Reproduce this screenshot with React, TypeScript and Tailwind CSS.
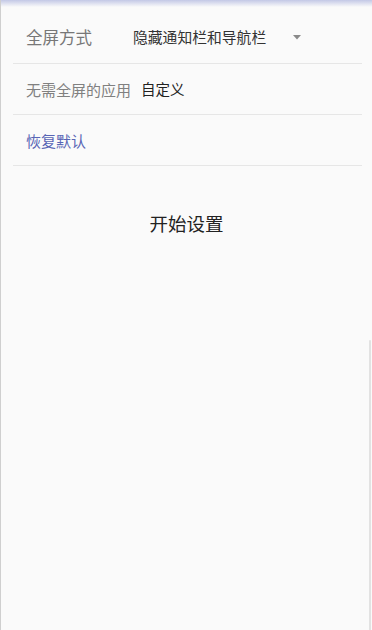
export default function App() {
  return (
    <div
      className="relative h-[630px] w-[372px] overflow-hidden border-l border-[#cfcfcf] bg-[#fafafa]"
      style={{ fontFamily: '"Noto Sans CJK SC", "Noto Sans", sans-serif' }}
    >
      {/* 顶部阴影 */}
      <div className="absolute inset-x-0 top-0 h-[7px] bg-gradient-to-b from-[#c3c8e6] to-transparent" />

      <div className="pl-[12px] pr-[10px]">
        <div className="flex h-[64px] items-center border-b border-[#e6e6e6] pl-[13px] pt-[12px]">
          <span className="w-[107px] text-[16.5px] leading-none text-[#777]">全屏方式</span>
          <span className="text-[14.8px] leading-none text-[#333]">隐藏通知栏和导航栏</span>
          <svg className="ml-[27px]" width="8" height="5" viewBox="0 0 8 5">
            <path d="M0 0h8L4 4.5z" fill="#8a8a8a" />
          </svg>
        </div>

        <div className="flex h-[51px] items-center border-b border-[#e6e6e6] pl-[13px] pt-[1px]">
          <span className="text-[15px] leading-none text-[#808080]">无需全屏的应用</span>
          <span className="ml-[10px] text-[14.5px] leading-none text-[#222]">自定义</span>
        </div>

        <div className="flex h-[51px] items-center border-b border-[#e6e6e6] pl-[13px] pt-[1px]">
          <span className="text-[15px] leading-none text-[#5865b5]">恢复默认</span>
        </div>
      </div>

      <div className="mt-[46px] text-center">
        <span className="text-[18.5px] leading-none text-[#222]">开始设置</span>
      </div>

      {/* 右侧边缘手柄 */}
      <div className="absolute right-[1px] top-[340px] bottom-0 w-[2px] rounded-t-full bg-[#e2e2e2]" />
    </div>
  );
}
